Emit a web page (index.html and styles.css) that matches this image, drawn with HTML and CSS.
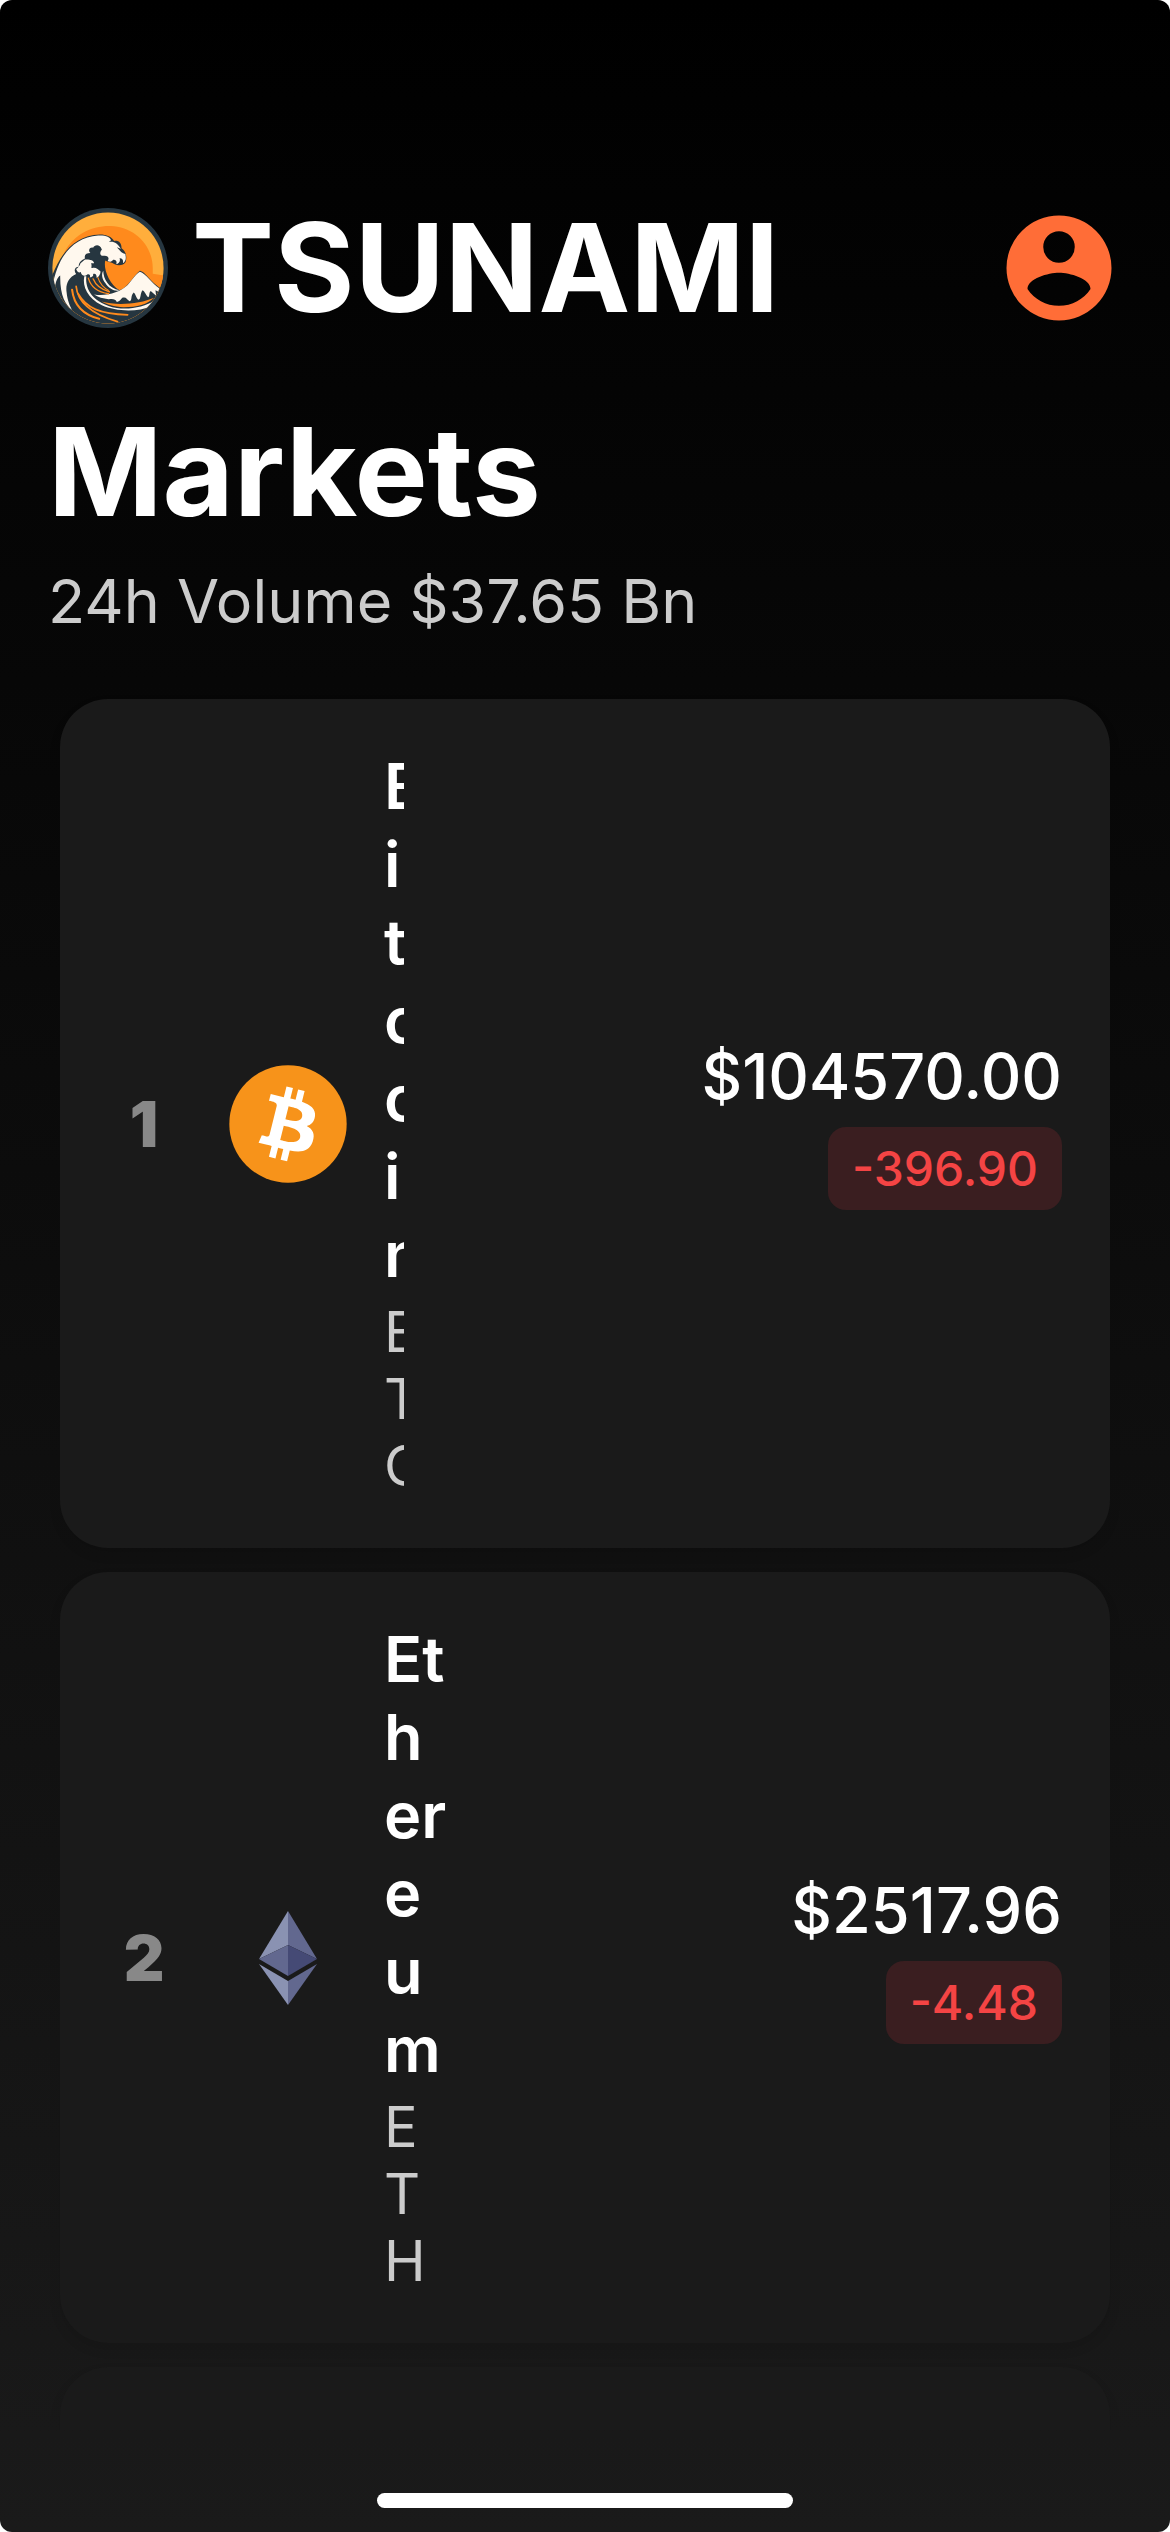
FILE: index.html
```html
<!DOCTYPE html>
<html lang="en">
<head>
<meta charset="utf-8">
<meta name="viewport" content="width=device-width, initial-scale=1">
<title>Tsunami</title>
<link rel="stylesheet" href="styles.css">
</head>
<body>
<div class="screen">
  <header class="topbar">
    <div class="brand">
      <svg class="brand-logo" viewBox="27 27 354 354" aria-hidden="true">
        <clipPath id="disc"><circle cx="204" cy="204" r="164"/></clipPath>
        <circle cx="204" cy="204" r="177" fill="#263640"/>
        <g clip-path="url(#disc)">
          <rect x="30" y="30" width="350" height="350" fill="#ffae3c"/>
          <path d="M66 180C90 110 150 79 212 80C280 82 336 135 336 205V221L380 228V380H60Z" fill="#ff8a1c"/>
          <path d="M30 250C60 165 100 108 180 105C200 105 215 112 222 124C236 122 244 130 244 146C256 154 261 170 256 186C250 196 235 199 222 192C208 185 202 186 196 182C190 205 206 250 238 270C265 260 280 225 298 212C312 212 338 255 362 264L360 380H40Z" fill="#263640"/>
          <path d="M40 260C55 170 100 114 175 108C198 107 210 112 213 122L206 127C222 124 232 131 242 147L230 143C240 154 246 162 255 163C258 175 257 184 248 190C250 180 246 174 238 175C242 184 236 192 228 193C232 184 226 178 219 180C216 186 209 187 203 183C210 174 202 166 191 168C180 170 178 158 186 150C180 132 164 136 160 144C150 142 144 152 152 160C138 160 134 166 136 176C122 182 116 192 118 200C106 200 102 212 110 222C88 232 78 252 82 276C84 300 92 316 98 328C78 312 62 284 63 226C54 232 50 245 47 262Z" fill="#fff8ee"/>
          <path d="M110 207C116 204 120 198 123 190L136 179C148 178 162 180 163 190L154 190C158 198 152 206 158 204C166 200 176 208 182 214C182 222 177 230 170 233C172 224 166 218 160 222C162 228 156 232 150 232C154 226 148 220 142 224C136 230 124 226 124 216C118 220 112 214 110 207Z" fill="#fff8ee"/>
          <path d="M140 228C136 268 160 308 230 322C270 328 310 318 345 299L332 316C290 336 226 332 186 314C144 292 128 260 134 228Z" fill="#fff8ee"/>
          <path d="M190 212C190 236 206 264 238 270C224 274 206 264 196 248C186 236 184 222 190 212Z" fill="#fff8ee"/>
          <path d="M163 282C200 288 238 276 262 254C276 238 286 222 298 215C316 220 334 250 355 264L353 274L344 270L346 286L330 272C324 276 328 290 322 290C314 282 312 272 306 270C298 280 302 296 294 298C286 292 286 280 280 276C270 284 276 300 268 302C258 296 258 288 246 292C240 300 236 304 230 304C226 296 220 294 206 296C190 294 174 290 163 282Z" fill="#fff8ee"/>
          <path d="M185 303C230 316 300 310 340 292C320 312 290 320 250 320C222 318 200 312 185 303Z" fill="#ff8a1c"/>
          <g fill="none" stroke="#ff8a1c" stroke-linecap="round">
            <path d="M98 268C104 320 138 344 178 354" stroke-width="6"/>
            <path d="M110 258C114 300 150 340 232 362" stroke-width="5"/>
            <path d="M116 280C140 322 180 340 262 342" stroke-width="5"/>
            <path d="M146 234C154 262 176 276 206 280" stroke-width="4"/>
            <path d="M160 236C168 256 184 268 208 274" stroke-width="4"/>
            <path d="M174 232C180 250 190 262 206 270" stroke-width="3"/>
          </g>
        </g>
      </svg>
      <span class="brand-name">TSUNAMI</span>
    </div>
    <button class="account" type="button" aria-label="Account">
      <svg viewBox="0 0 24 24" aria-hidden="true"><path fill="#ff6d37" fill-rule="evenodd" d="M12 2a10 10 0 1 0 0 20a10 10 0 1 0 0-20zM12 5a3 3 0 1 1 0 6a3 3 0 1 1 0-6zM12 19.2c-2.500 0-4.710-1.280-6-3.220c.030-1.990 4-3.080 6-3.080c1.990 0 5.970 1.090 6 3.080c-1.290 1.940-3.500 3.220-6 3.220z"/></svg>
    </button>
  </header>

  <section class="heading">
    <h1>Markets</h1>
    <p>24h Volume $37.65 Bn</p>
  </section>

  <ul class="markets">
    <li class="coin">
      <span class="rank">1</span>
      <svg class="coin-icon" viewBox="0 0 32 32" aria-hidden="true">
        <circle cx="16" cy="16" r="15.650" fill="#f7931a"/>
        <path fill="#fff" d="M23.189 14.020c.314-2.096-1.283-3.223-3.465-3.975l.708-2.840-1.728-.43-.69 2.765c-.454-.114-.92-.22-1.385-.326l.695-2.783L15.596 6l-.708 2.839c-.376-.086-.746-.17-1.104-.26l.002-.009-2.384-.595-.46 1.846s1.283.294 1.256.312c.7.175.826.638.805 1.006l-.806 3.235c.048.012.11.03.18.057l-.183-.045-1.130 4.532c-.086.212-.303.531-.793.41.018.025-1.256-.313-1.256-.313l-.858 1.978 2.250.561c.418.105.828.215 1.231.318l-.715 2.872 1.727.43.708-2.840c.472.127.93.245 1.378.357l-.706 2.828 1.728.43.715-2.866c2.948.558 5.164.333 6.097-2.333.752-2.146-.037-3.385-1.588-4.192 1.130-.26 1.980-1.003 2.207-2.538zm-3.950 5.538c-.533 2.147-4.148.986-5.320.695l.95-3.805c1.172.293 4.929.872 4.370 3.110zm.535-5.569c-.487 1.953-3.495.96-4.470.717l.86-3.450c.975.243 4.118.696 3.610 2.733z"/>
      </svg>
      <div class="coin-title">
        <span class="coin-name">Bitcoin</span>
        <span class="coin-symbol">BTC</span>
      </div>
      <div class="quote">
        <span class="price">$104570.00</span>
        <span class="change">-396.90</span>
      </div>
    </li>
    <li class="coin">
      <span class="rank">2</span>
      <svg class="coin-icon" viewBox="0 0 120 120" aria-hidden="true">
        <path fill="#8a92b2" d="M60 13v34L31 61z"/>
        <path fill="#62688f" d="M60 13v34l29 14z"/>
        <path fill="#62688f" d="M60 47v31L31 61z"/>
        <path fill="#454a75" d="M60 47v31l29-17z"/>
        <path fill="#8a92b2" d="M31 66l29 17v24z"/>
        <path fill="#62688f" d="M89 66L60 83v24z"/>
      </svg>
      <div class="coin-title">
        <span class="coin-name">Ethereum</span>
        <span class="coin-symbol">ETH</span>
      </div>
      <div class="quote">
        <span class="price">$2517.96</span>
        <span class="change">-4.48</span>
      </div>
    </li>
    <li class="coin coin-loading"></li>
  </ul>

  <div class="home-area"><div class="home-indicator"></div></div>
</div>
</body>
</html>
```
FILE: styles.css
```css
* {
  box-sizing: border-box;
}

body {
  margin: 0;
  background: #fff;
  font-family: Inter, "Liberation Sans", sans-serif;
  color: #fff;
}

.screen {
  display: flex;
  flex-direction: column;
  height: 100vh;
  padding-top: 190px;
  overflow: hidden;
  border-radius: 12px;
  background: linear-gradient(#000, #1a1a1a);
}

.topbar {
  display: flex;
  align-items: center;
  justify-content: space-between;
  padding: 0 48px;
}

.brand {
  display: flex;
  align-items: center;
  gap: 24px;
}

.brand-logo {
  width: 120px;
  height: 120px;
}

.brand-name {
  font-size: 123px;
  font-weight: 700;
  line-height: 156px;
}

.account {
  width: 126px;
  height: 126px;
  padding: 0;
  border: 0;
  background: none;
}

.account svg {
  display: block;
  width: 100%;
  height: 100%;
}

.heading {
  padding: 48px 48px 0;
}

.heading h1 {
  margin: 0;
  font-size: 123px;
  font-weight: 700;
  line-height: 156px;
}

.heading p {
  margin: 12px 0 0;
  font-size: 61px;
  line-height: 78px;
  color: #ccc;
}

.markets {
  display: flex;
  flex: 1;
  flex-direction: column;
  gap: 24px;
  min-height: 0;
  margin: 0;
  padding: 59px 60px 0;
  overflow: hidden;
  list-style: none;
}

.coin {
  display: flex;
  flex: none;
  align-items: center;
  padding: 48px;
  border-radius: 48px;
  background: #1a1a1a;
  box-shadow: 0 6px 12px rgba(0, 0, 0, 0.1);
}

.coin-loading {
  min-height: 771px;
}

.rank {
  width: 72px;
  margin-right: 48px;
  font-size: 63px;
  font-weight: 900;
  line-height: 78px;
  text-align: center;
  color: #888;
}

.coin-icon {
  flex: none;
  width: 120px;
  height: 120px;
  margin-right: 36px;
}

.coin-title {
  display: flex;
  flex: 1 1 0;
  flex-direction: column;
  gap: 6px;
  min-width: 0;
  overflow: hidden;
  word-break: break-all;
}

.coin-name {
  font-size: 63px;
  font-weight: 600;
  line-height: 78px;
}

.coin-symbol {
  font-size: 56px;
  line-height: 67px;
  color: #ccc;
}

.quote {
  display: flex;
  flex: 1 1 auto;
  flex-direction: column;
  align-items: flex-end;
  gap: 12px;
  padding-left: 278px;
}

.price {
  font-size: 63px;
  font-weight: 500;
  line-height: 78px;
}

.change {
  padding: 12px 24px;
  border-radius: 18px;
  background: #3a1e20;
  font-size: 48px;
  font-weight: 500;
  line-height: 59px;
  color: #f44444;
}

.home-area {
  display: flex;
  flex: none;
  justify-content: center;
  align-items: flex-end;
  height: 102px;
  padding-bottom: 24px;
}

.home-indicator {
  width: 416px;
  height: 15px;
  border-radius: 8px;
  background: #fff;
}
```
